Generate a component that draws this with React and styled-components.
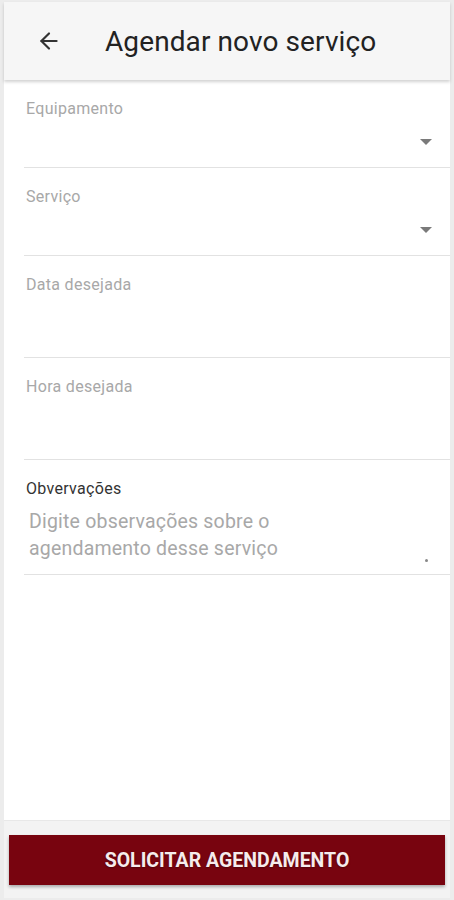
import React from "react";
import styled, { createGlobalStyle } from "styled-components";
import { ArrowLeft } from "lucide-react";

const GlobalStyle = createGlobalStyle`
  html, body {
    margin: 0;
    padding: 0;
    background: #ececec;
    font-family: Roboto, "Noto Sans", Arial, sans-serif;
  }
  * { box-sizing: border-box; }
`;

const Screen = styled.div`
  height: 900px;
  padding: 2px 4px 2px 4px;
  display: flex;
  flex-direction: column;
`;

const Header = styled.header`
  height: 78px;
  background: #f6f6f6;
  display: flex;
  align-items: center;
  padding-left: 32px;
  gap: 43px;
  box-shadow: 0 2px 3px rgba(0, 0, 0, 0.18);
  position: relative;
  z-index: 1;
`;

const Title = styled.h1`
  margin: 0;
  font-size: 28px;
  font-weight: 400;
  color: #222;
  letter-spacing: 0.1px;
`;

const Content = styled.main`
  flex: 1;
  background: #fff;
  display: flex;
  flex-direction: column;
`;

const Field = styled.div`
  position: relative;
  margin-left: 20px;
  height: ${p => p.height}px;
  padding-top: 20px;
  border-bottom: 1px solid #e2e2e2;
`;

const Label = styled.div`
  margin-left: 2px;
  font-size: 16px;
  line-height: 18px;
  letter-spacing: 0.3px;
  color: ${p => (p.dark ? "#333" : "#a8a8a8")};
`;

const Caret = styled.span`
  position: absolute;
  right: 18px;
  top: 59px;
  width: 0;
  height: 0;
  border-left: 6px solid transparent;
  border-right: 6px solid transparent;
  border-top: 6px solid #7a7a7a;
`;

const Placeholder = styled.div`
  margin: 10px 0 0 5px;
  font-size: 19.5px;
  line-height: 27px;
  color: #a8a8a8;
  letter-spacing: 0.2px;
`;

const Grip = styled.span`
  position: absolute;
  right: 22px;
  bottom: 12px;
  width: 3px;
  height: 3px;
  background: #888;
  border-radius: 50%;
`;

const Footer = styled.footer`
  padding: 14px 5px 13px;
  background: #f3f3f3;
  border-top: 1px solid #e8e8e8;
`;

const Button = styled.button`
  width: 100%;
  height: 50px;
  border: none;
  background: #78040f;
  color: #f6ecec;
  font-family: Roboto, Arial, sans-serif;
  font-size: 19.5px;
  font-weight: 700;
  letter-spacing: 0;
  text-shadow: 0 1px 2px rgba(0, 0, 0, 0.35);
  box-shadow: 0 2px 3px rgba(0, 0, 0, 0.3);
`;

const fields = [
  { label: "Equipamento", height: 88, select: true },
  { label: "Serviço", height: 88, select: true },
  { label: "Data desejada", height: 102 },
  { label: "Hora desejada", height: 102 }
];

export default function App() {
  return (
    <>
      <GlobalStyle />
      <Screen>
        <Header>
          <ArrowLeft size={26} color="#333" strokeWidth={2} />
          <Title>Agendar novo serviço</Title>
        </Header>
        <Content>
          {fields.map(f => (
            <Field key={f.label} height={f.height}>
              <Label>{f.label}</Label>
              {f.select && <Caret />}
            </Field>
          ))}
          <Field height={115}>
            <Label dark>Obvervações</Label>
            <Placeholder>
              Digite observações sobre o
              <br />
              agendamento desse serviço
            </Placeholder>
            <Grip />
          </Field>
        </Content>
        <Footer>
          <Button>SOLICITAR AGENDAMENTO</Button>
        </Footer>
      </Screen>
    </>
  );
}
